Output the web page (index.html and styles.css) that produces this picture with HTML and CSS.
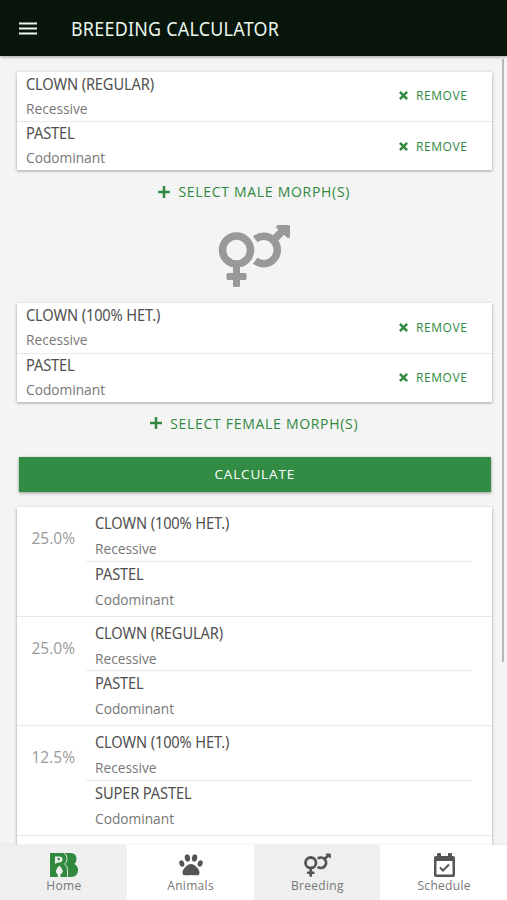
FILE: index.html
```html
<!DOCTYPE html>
<html lang="en">
<head>
<meta charset="utf-8">
<title>Breeding Calculator</title>
<link rel="stylesheet" href="styles.css">
</head>
<body>
<svg width="0" height="0" class="defs">
  <symbol id="sexes" viewBox="0 0 72 64">
    <g fill="none" stroke="currentColor">
      <circle cx="18" cy="26" r="14" stroke-width="7.5"/>
      <path d="M36.700 15.200A13.700 13.700 0 1 1 36.700 36.800M54 17L65 6" stroke-width="7.500"/>
    </g>
    <path fill="currentColor" d="M14.500 42h7v7h5q1.500 0 1.500 1.500v4q0 1.500-1.500 1.500h-5v5.500q0 1.500-1.500 1.500h-4q-1.500 0-1.500-1.500V56h-5Q8 56 8 54.500v-4Q8 49 9.500 49h5zM59.500 1H70q1.500 0 1.500 1.500V13q-1 2-3 .5L58 4q-1-2 1.500-3z"/>
  </symbol>
  <symbol id="plus" viewBox="0 0 12 12"><path d="M6 0v12M0 6h12" stroke="currentColor" stroke-width="2.500"/></symbol>
  <symbol id="cross" viewBox="0 0 8 8"><path d="M.8.8l6.400 6.400M7.200.8L.8 7.200" stroke="currentColor" stroke-width="2.200"/></symbol>
</svg>
<header class="topbar">
  <svg class="menu" viewBox="0 0 18 13"><path d="M0 1.500h18M0 6.500h18M0 11.500h18" stroke="currentColor" stroke-width="2"/></svg>
  <h1>BREEDING CALCULATOR</h1>
</header>
<main class="content">
  <section class="card parent">
    <div class="row"><div><h2>CLOWN (REGULAR)</h2><p>Recessive</p></div><button class="remove"><svg><use href="#cross"/></svg>REMOVE</button></div>
    <div class="row"><div><h2>PASTEL</h2><p>Codominant</p></div><button class="remove"><svg><use href="#cross"/></svg>REMOVE</button></div>
  </section>
  <button class="select"><svg><use href="#plus"/></svg>SELECT MALE MORPH(S)</button>
  <svg class="sexes"><use href="#sexes"/></svg>
  <section class="card parent">
    <div class="row"><div><h2>CLOWN (100% HET.)</h2><p>Recessive</p></div><button class="remove"><svg><use href="#cross"/></svg>REMOVE</button></div>
    <div class="row"><div><h2>PASTEL</h2><p>Codominant</p></div><button class="remove"><svg><use href="#cross"/></svg>REMOVE</button></div>
  </section>
  <button class="select"><svg><use href="#plus"/></svg>SELECT FEMALE MORPH(S)</button>
  <button class="calculate">CALCULATE</button>
  <section class="card results">
    <div class="result"><span class="chance">25.0%</span><div class="morphs">
      <div class="morph"><h2>CLOWN (100% HET.)</h2><p>Recessive</p></div>
      <div class="morph"><h2>PASTEL</h2><p>Codominant</p></div></div></div>
    <div class="result"><span class="chance">25.0%</span><div class="morphs">
      <div class="morph"><h2>CLOWN (REGULAR)</h2><p>Recessive</p></div>
      <div class="morph"><h2>PASTEL</h2><p>Codominant</p></div></div></div>
    <div class="result"><span class="chance">12.5%</span><div class="morphs">
      <div class="morph"><h2>CLOWN (100% HET.)</h2><p>Recessive</p></div>
      <div class="morph"><h2>SUPER PASTEL</h2><p>Codominant</p></div></div></div>
    <div class="result"></div>
  </section>
  <div class="scrollbar"></div>
</main>
<nav class="tabs">
  <a class="tab shaded"><svg class="logo" viewBox="0 0 28 24"><path fill="#30893f" d="M0 0h20.500q6 0 6 6 0 3-2 5 3.500 2 3.500 6 0 7-7 7H0z"/><path fill="none" stroke="#efefef" stroke-width=".9" d="M13.500 0q3.500 1 3.500 5.500 0 4-2.500 5.500 3 2 3 6v7"/><path fill="#efefef" d="M5 3.500h4q3.500 0 3.500 3T9 9.500H7.500L5 11zM9.300 12.500q-6 6-1.500 9V24h2.700v-2.500q5-3-1.200-9z"/><circle cx="8.700" cy="6" r="1.200" fill="#30893f"/></svg><span>Home</span></a>
  <a class="tab"><svg class="paw" viewBox="0 0 24 22"><g fill="currentColor"><ellipse cx="8.400" cy="4" rx="2.600" ry="3.700" transform="rotate(-12 8.400 4)"/><ellipse cx="15.600" cy="4" rx="2.600" ry="3.700" transform="rotate(12 15.600 4)"/><ellipse cx="2.800" cy="9.500" rx="2.400" ry="3.200" transform="rotate(-22 2.800 9.500)"/><ellipse cx="21.200" cy="9.500" rx="2.400" ry="3.200" transform="rotate(22 21.200 9.500)"/><path d="M12 10c-3.500 0-8.500 5-8.500 8.700 0 4 5 2.300 8.500 2.300s8.500 1.700 8.500-2.300C20.500 15 15.500 10 12 10z"/></g></svg><span>Animals</span></a>
  <a class="tab shaded"><svg class="pair"><use href="#sexes"/></svg><span>Breeding</span></a>
  <a class="tab"><svg class="calendar" viewBox="0 0 21 24"><path fill="currentColor" fill-rule="evenodd" d="M3 3V1q0-1 1-1h2q1 0 1 1v2h7V1q0-1 1-1h2q1 0 1 1v2h1q2 0 2 2v17q0 2-2 2H2q-2 0-2-2V5q0-2 2-2zM2.500 8v13.500h16V8z"/><path d="M6 14.500l3 3 6-6" fill="none" stroke="currentColor" stroke-width="2"/></svg><span>Schedule</span></a>
</nav>
</body>
</html>
```
FILE: styles.css
```css
* { box-sizing: border-box; }
body { margin: 0; height: 900px; overflow: hidden; display: flex; flex-direction: column; background: #f4f4f4; color: #555; font-family: "Open Sans", sans-serif; }
h1, h2, p { margin: 0; font-weight: 400; white-space: nowrap; transform-origin: left; }
button { border: 0; padding: 0; background: none; font-family: inherit; color: #30893f; display: flex; align-items: center; justify-content: center; }
.defs { position: absolute; }
.topbar { height: 55.500px; flex: none; background: #07150a; color: #edf7ee; display: flex; align-items: center; padding: 1px 0 0 19px; box-shadow: 0 1px 3px rgba(0,0,0,.35); }
.menu { width: 18px; height: 13px; margin-right: 34px; }
h1 { font-family: "Noto Sans", sans-serif; font-size: 19px; transform: translateY(1px) scaleX(.94); letter-spacing: .28px; }
.content { flex: 1; min-height: 0; overflow: hidden; position: relative; padding: 16px 15px 0 16.500px; display: flex; flex-direction: column; }
.card { flex: none; background: #fff; box-shadow: 0 1px 3px rgba(0,0,0,.35); }
.parent { height: 98.500px; }
.row { height: 49.500px; display: flex; justify-content: space-between; padding: 0 24.500px 0 9.500px; }
.row:last-child { height: 49px; }
.row + .row { border-top: 1px solid #eaeaea; }
h2 { font-family: "Noto Sans", sans-serif; font-size: 16px; line-height: 26px; letter-spacing: -.15px; color: #505050; transform: scaleX(.915); }
p { font-size: 14px; line-height: 24px; color: #777; transform: scaleX(.98); }
.row h2 { margin-top: -1px; }
.row + .row h2 { margin-top: -2px; }
.remove { height: 48px; font-size: 12px; letter-spacing: .6px; }
.remove svg { width: 9px; height: 9px; margin-right: 8px; }
.select { height: 42px; flex: none; font-size: 14px; letter-spacing: .7px; padding-top: 1px; }
.select svg { width: 12px; height: 12px; margin-right: 8px; }
.sexes { width: 72px; height: 64px; margin: 12px 0 15px; align-self: center; color: #999; flex: none; transform: translateX(.5px); }
.calculate { flex: none; height: 35px; margin: 13px 1px 15.500px 2px; color: #fff; background: #338c43; font-size: 13.500px; letter-spacing: .85px; box-shadow: 0 1px 3px rgba(0,0,0,.4); }
.result { height: 109.500px; display: flex; border-bottom: 1px solid #eaeaea; }
.chance { width: 69.500px; padding: 19px 0 0 15px; font-size: 15.500px; line-height: 25px; color: #999; }
.morphs { width: 386px; padding-top: 4px; }
.morph { height: 50px; padding-left: 9px; }
.morph h2 { line-height: 25px; }
.morph:first-child { height: 50.500px; border-bottom: 1px solid #eaeaea; }
.morph p { line-height: 25px; }
.scrollbar { position: absolute; top: 3px; right: 3px; width: 2.500px; height: 603px; background: #b7b7b7; }
.tabs { height: 55.500px; flex: none; display: grid; grid-template-columns: repeat(4, 1fr); position: relative; box-shadow: 0 -1px 2px rgba(0,0,0,.06); }
.tab { background: #fff; display: flex; flex-direction: column; align-items: center; padding: 8px 0 0 1px; color: #555; }
.shaded { background: #efefef; }
.tab span { font-size: 12px; line-height: 17px; letter-spacing: .3px; color: #777; }
.tab svg { height: 24px; }
.logo { width: 28px; }
.paw { width: 24px; }
.pair { width: 27px; }
.calendar { width: 21px; }
```
